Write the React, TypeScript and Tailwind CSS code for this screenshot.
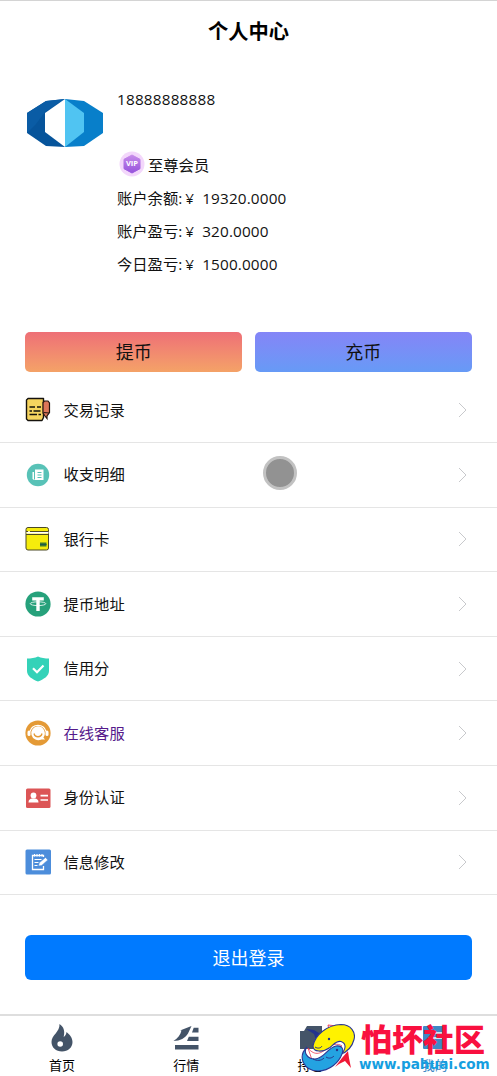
import { ReactNode } from "react";

const ClientLogo = () => (
  <svg className="block w-[78px] h-[48px]" viewBox="0 0 78 48">
    <path d="M39 0 20 2 1 14v20l19 13 19 1Z" fill="#06549b" />
    <path d="M20 2 1 14v20l9-9 9-12 20-13Z" fill="#0a5ca5" />
    <path d="M39 0 58 2 77 14v20L58 47l-19 1Z" fill="#087fca" />
    <path d="M39 0 19 14v19l20 15Z" fill="#fff" />
    <path d="m39 0 19 14v19L39 48Z" fill="#50c4f2" />
  </svg>
);

const VipBadge = () => (
  <svg className="block w-[26px] h-[26px]" viewBox="0 0 26 26">
    <defs>
      <linearGradient id="vip" x1="0" y1="0" x2="0" y2="1">
        <stop offset="0" stopColor="#c78bea" />
        <stop offset="1" stopColor="#9653dc" />
      </linearGradient>
    </defs>
    <circle cx="13" cy="13" r="12.500" fill="#f3d7fb" />
    <path d="m13 4 8 4.300v9.400L13 22l-8-4.300V8.300Z" fill="url(#vip)" stroke="url(#vip)" strokeLinejoin="round" />
    <text x="13" y="15.200" textAnchor="middle" fontSize="7.500" fontWeight="700" fill="#fff">
      VIP
    </text>
  </svg>
);

const RecordIcon = () => (
  <svg className="block w-[26px] h-[26px]" viewBox="0 0 26 26">
    <path d="M3 1.500h15.500v19l-1.500 3H3L1.500 22V3Z" fill="#f6d45f" stroke="#15120d" strokeWidth="1.400" strokeLinejoin="round" />
    <path d="M18 5.500 19.500 4h3.500l1.500 2v9.500l-2.500 3.500v2.500l-2-2.500-2-3Z" fill="#dd7659" stroke="#24160f" strokeWidth="1.200" />
    <path d="M18.500 15.500 24 16" stroke="#24160f" />
    <path d="M4.500 10h5.500m2 0h4M4.500 14H7m1.500 0h7M4.500 17.500H12m1.500 0h2.500" stroke="#15120d" strokeWidth="1.400" />
  </svg>
);

const DetailIcon = () => (
  <svg className="block w-[26px] h-[26px]" viewBox="0 0 26 26">
    <circle cx="13" cy="13" r="11.200" fill="#58c2b7" />
    <path d="M10 7.500h8.500V18H9l1-1Z" fill="#fff" />
    <path d="M9 10H7.500v7L9 18Z" fill="#fff" />
    <path d="M12.500 10.500h4M12.500 13h4m-4 2.500h4" stroke="#58c2b7" strokeWidth="1.100" />
  </svg>
);

const BankCardIcon = () => (
  <svg className="block w-[26px] h-[26px]" viewBox="0 0 26 26">
    <rect x="1" y="1.500" width="22.500" height="22.500" rx="2" fill="#f5ec0c" stroke="#4b4925" />
    <path d="M1.500 6.500h22" stroke="#fff" strokeWidth="2.200" />
    <path d="M1 5.500h2m2 0h18.500M1 8.500h22.500" stroke="#4b4925" />
    <path d="M15 18.500h6.500" stroke="#3c7a2f" strokeWidth="4" />
    <path d="M15 18.500h6.500" stroke="#1e5a4a" />
  </svg>
);

const TetherIcon = () => (
  <svg className="block w-[26px] h-[26px]" viewBox="0 0 26 26">
    <circle cx="13" cy="13" r="12.600" fill="#26a17b" />
    <path d="M7.200 6.200h11.600v3.300h-4.100V20h-3.400V9.500H7.200Z" fill="#fff" />
    <ellipse cx="13" cy="12.700" rx="7.800" ry="1.900" fill="none" stroke="#fff" strokeWidth=".8" />
  </svg>
);

const CreditIcon = () => (
  <svg className="block w-[26px] h-[26px]" viewBox="0 0 26 26">
    <path d="M13 .500c3 1.500 7 2 11 2V15c0 5-5.500 8.500-11 10.500C7.500 23.500 2 20 2 15V2.500c4 0 8-.5 11-2Z" fill="#34d2b8" />
    <path d="m8 12.200 4 4 6.500-6.700" fill="none" stroke="#fff" strokeWidth="2.200" />
  </svg>
);

const ServiceIcon = () => (
  <svg className="block w-[26px] h-[26px]" viewBox="0 0 26 26">
    <circle cx="13" cy="13" r="12.600" fill="#e49a36" />
    <path d="M5 11.500a8.300 8.300 0 0 1 16 0" fill="none" stroke="#fff" strokeWidth="1.200" />
    <path d="M13 6.200a7 7 0 1 0 3.500 13.200H20l-1.600-2A7 7 0 0 0 13 6.200Z" fill="#fff" />
    <rect x="2.500" y="10.500" width="3" height="5.500" rx="1.500" fill="#fff" />
    <rect x="20.500" y="10.500" width="3" height="5.500" rx="1.500" fill="#fff" />
    <path d="M9 13.500c1 4.300 7 4.300 8 0" fill="none" stroke="#e49a36" strokeWidth="1.300" />
  </svg>
);

const IdentityIcon = () => (
  <svg className="block w-[26px] h-[26px]" viewBox="0 0 26 26">
    <rect x="1" y="3.500" width="24.500" height="19.500" rx="1.500" fill="#dc5556" />
    <circle cx="8.500" cy="10.500" r="2.900" fill="#fff" />
    <path d="M3.500 17.500c0-3 2-4 3.500-4h3c1.500 0 3.500 1 3.500 4Z" fill="#fff" />
    <path d="M15.500 10.700H23M15.500 15H23" stroke="#fff" strokeWidth="1.700" />
  </svg>
);

const EditIcon = () => (
  <svg className="block w-[26px] h-[26px]" viewBox="0 0 26 26">
    <rect x=".5" y=".5" width="25.500" height="25" rx="1.500" fill="#4c8ddb" />
    <path d="M18.500 8V6.500h-11v14h11V17" fill="none" stroke="#fff" strokeWidth="1.300" />
    <path d="M9.500 5v2.500m2.500-2.500v2.500M14.500 5v2.500M17 5v2.500M9.500 10.500h7m-7 3h4m-4 3h3" stroke="#fff" />
    <path d="m13.500 17 .8-3.200 6.200-5.300 2.300 2.500-6.100 5.400Z" fill="#fff" stroke="#4c8ddb" strokeWidth=".5" />
  </svg>
);

const FlameIcon = () => (
  <svg className="block w-[24px] h-[30px]" viewBox="0 0 24 30">
    <path
      fillRule="evenodd"
      d="M9.500 1c4.500 3 5.500 7 4.200 13 1.800-1.200 2.600-3 2.800-5C19.500 11.500 22.500 14.500 22.500 19c0 5.500-4.500 9.500-10.500 9.500s-10.500-4-10.500-9.500C1.500 12 10 9 9.500 1Zm.7 17.200a2.800 2.800 0 1 0 0 5.600 2.800 2.800 0 0 0 0-5.600Z"
      fill="#445468"
    />
  </svg>
);

const MarketIcon = () => (
  <svg className="block w-[26px] h-[30px]" viewBox="0 0 26 30">
    <path d="M2 26.500V22h23.500v4.500ZM14 18l1.800-4.200h9.700V18ZM19 9.500l1.700-4.700h4.800v4.700ZM.500 18C5 15 7.500 11.500 8.500 7.500H7L18.500 3 15 10.500C12.500 15 7 18 .500 18Z" fill="#445468" />
  </svg>
);

const HoldingIcon = () => (
  <svg className="block w-[26px] h-[30px]" viewBox="0 0 26 30">
    <path d="M2 8h4l3-5h15v23H2Z" fill="#445468" />
  </svg>
);

const MineIcon = () => (
  <svg className="block w-[26px] h-[30px]" viewBox="0 0 26 30">
    <rect x="1" y="3" width="23" height="23" rx="1" fill="#3e88c6" />
    <path d="M6 10h14M6 15h14" stroke="#fff" strokeWidth="1.500" />
  </svg>
);

const FishLogo = () => (
  <svg className="block w-[54px] h-[52px]" viewBox="0 0 54 52">
    <path d="m15 19-2-6-8-5 8 1 5 3 8-5-6 9Z" fill="#23338d" />
    <path d="m28 9-1-5 9 1-3 3Z" fill="#fff" stroke="#e71d38" strokeWidth=".8" />
    <path d="M7 27c7 9 14 5 19 0 5-4 11-5 15-2l-8 4-10 9-12 1Z" fill="#fff" stroke="#e71d38" strokeWidth=".7" />
    <path d="M12 25C14 14 26 4 40 3.500c10 0 15 8 13 15-2 8-8 13-14 15 6-4 7-11 1-13-5-1-7 3-11 6-7 5-17 5-17-1.500Z" fill="#fff200" stroke="#2b3793" strokeWidth="1.100" />
    <path d="M6 26C2 31 6 38 14 38c9 0 12-11 21-13 6-1 8 3 6 8-3 8-12 17-24 17C3 50-4 36 6 26Z" fill="#24a3e1" stroke="#2b3793" strokeWidth="1.100" />
    <circle cx="28" cy="18" r="1.200" fill="#26358b" />
    <circle cx="36" cy="29" r="1.200" fill="#26358b" />
    <path d="M14 26c3 2 6 1 7-1m4 11c3 2 6 1 8-1M12 38c4 2 8 2 11-1" fill="none" stroke="#26358b" />
    <path d="m34 46 7-9 6-7 1 7 2 10-6-7-6 3Z" fill="#ef1836" />
  </svg>
);

const Chevron = () => (
  <svg className="block w-[9px] h-[16px]" viewBox="0 0 9 16">
    <path d="m1 1 7 7-7 7" fill="none" stroke="#c8c9cc" />
  </svg>
);

type MenuItem = { label: string; icon: ReactNode; color?: string };

const menu: MenuItem[] = [
  { label: "交易记录", icon: <RecordIcon /> },
  { label: "收支明细", icon: <DetailIcon /> },
  { label: "银行卡", icon: <BankCardIcon /> },
  { label: "提币地址", icon: <TetherIcon /> },
  { label: "信用分", icon: <CreditIcon /> },
  { label: "在线客服", icon: <ServiceIcon />, color: "text-[#551a8b]" },
  { label: "身份认证", icon: <IdentityIcon /> },
  { label: "信息修改", icon: <EditIcon /> },
];

const balances = [
  { label: "账户余额:", value: "19320.0000" },
  { label: "账户盈亏:", value: "320.0000" },
  { label: "今日盈亏:", value: "1500.0000" },
];

const tabs = [
  { label: "首页", icon: <FlameIcon /> },
  { label: "行情", icon: <MarketIcon /> },
  { label: "持仓", icon: <HoldingIcon /> },
  { label: "我的", icon: <MineIcon />, color: "text-[#3e88c6]" },
];

export default function App() {
  return (
    <div className="relative flex flex-col w-[497px] h-[1076px] overflow-hidden bg-white border-t border-[#d4d4d4] text-[#111] text-[15.3px] font-['Open_Sans','Noto_Sans_CJK_SC',sans-serif]">
      <header className="h-[60px] flex items-center justify-center text-[20.3px] font-bold text-black">
        个人中心
      </header>

      {/* dados da conta */}
      <section className="h-[271.4px] flex pl-[26px] pt-[38px]">
        <ClientLogo />
        <div className="ml-[13px] -mt-[16px]">
          <div className="h-[33px] flex items-center tracking-[0.2px]">18888888888</div>
          <div className="h-[33px]" />
          <div className="h-[33px] flex items-center gap-[3px] pl-[2px]">
            <div className="-mt-[3px]">
              <VipBadge />
            </div>
            <span>至尊会员</span>
          </div>
          {balances.map((item) => (
            <div key={item.label} className="h-[33px] flex items-center">
              <span>{item.label}</span>
              <span className="ml-[3px] w-[17px]">¥</span>
              <span className="tracking-[0.15px]">{item.value}</span>
            </div>
          ))}
        </div>
      </section>

      <div className="flex gap-[13px] px-[25.4px] text-[18px]">
        <button className="flex-1 h-[40px] pt-px rounded-[5px] bg-linear-to-b from-[#ee6f76] to-[#f4a267]">提币</button>
        <button className="flex-1 h-[40px] pt-px rounded-[5px] bg-linear-to-b from-[#8485f7] to-[#669af6]">充币</button>
      </div>

      <ul className="mt-[6px]">
        {menu.map((item) => (
          <li key={item.label} className="h-[64.6px] flex items-center pl-[25px] pr-[30px] border-b border-[#e5e5e5]">
            {item.icon}
            <span className={`ml-[12.5px] flex-1 ${item.color ?? ""}`}>{item.label}</span>
            <Chevron />
          </li>
        ))}
      </ul>

      <button className="mt-[40px] mx-[25.4px] h-[45px] pt-px shrink-0 rounded-[6px] bg-[#007aff] text-white text-[18px]">
        退出登录
      </button>

      <nav className="mt-auto h-[62.5px] shrink-0 flex border-t-2 border-[#dedede]">
        {tabs.map((tab) => (
          <div key={tab.label} className="flex-1 flex flex-col items-center pt-[7.5px]">
            {tab.icon}
            <span className={`mt-[2.5px] text-[13px] leading-[18px] ${tab.color ?? "text-black"}`}>{tab.label}</span>
          </div>
        ))}
      </nav>

      {/* ponteiro de toque */}
      <div className="absolute left-[263px] top-[455px] w-[34px] h-[34px] rounded-full bg-[#929292] border-[3px] border-[#c2c2c2]" />

      <div className="absolute left-[301px] top-[1020px] flex">
        <FishLogo />
        <div className="ml-[6px] flex flex-col">
          <span className="text-[31px] leading-[36px] font-black text-[#f9103f] whitespace-nowrap">怕坏社区</span>
          <span className="-mt-[2px] ml-[-2px] text-[13.6px] leading-[18px] font-bold text-[#159ee0] whitespace-nowrap font-['DejaVu_Sans',sans-serif]">
            www.pahuai.com
          </span>
        </div>
      </div>
    </div>
  );
}
